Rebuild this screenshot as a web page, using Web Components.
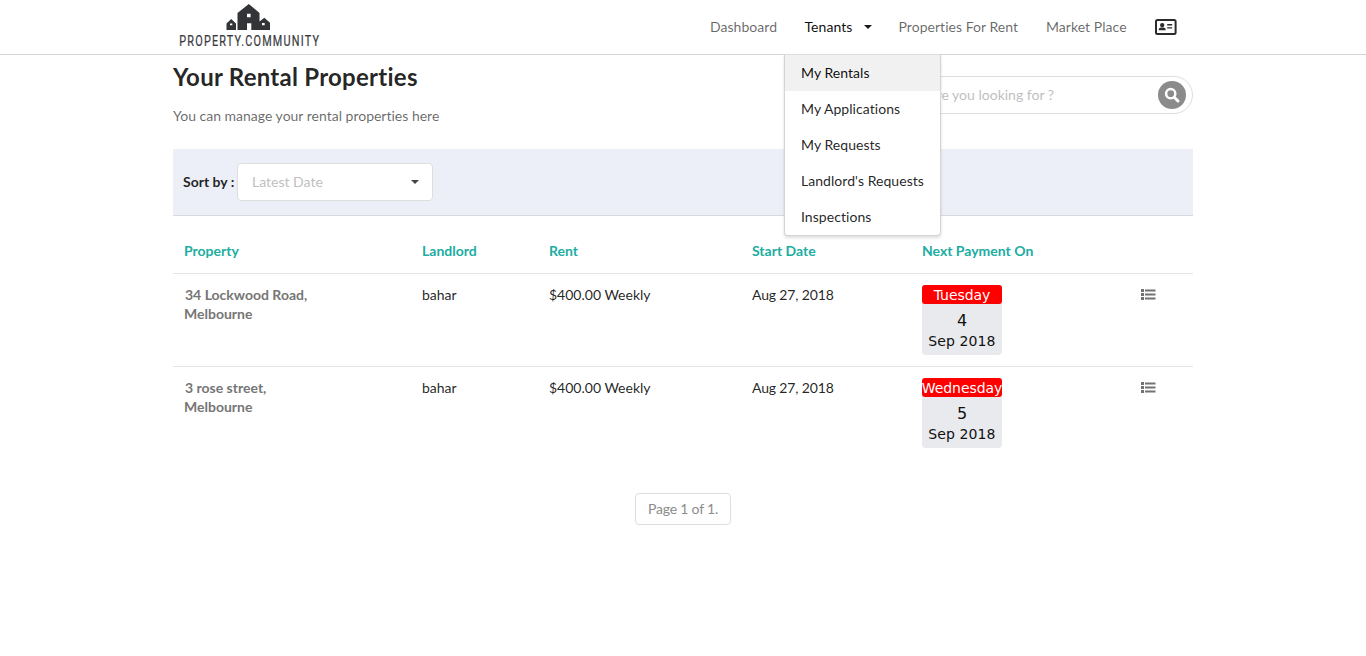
<!DOCTYPE html>
<html lang="en">
<head>
<meta charset="utf-8">
<title>Your Rental Properties</title>
<style>
body{margin:0;background:#fff;font:14px/20px Lato,"Open Sans",sans-serif;font-variant-ligatures:none;color:rgba(0,0,0,.87);overflow:hidden}
</style>
</head>
<body>
<rental-page></rental-page>
<script>
function define(name, html){
  const t=document.createElement('template');
  t.innerHTML='<style>*{box-sizing:border-box}</style>'+html;
  customElements.define(name, class extends HTMLElement{
    constructor(){super();this.attachShadow({mode:'open'}).appendChild(t.content.cloneNode(true));}
  });
}

define('site-logo', `<style>:host{display:block;width:150px;height:54px}svg{display:block}</style>
<svg width="150" height="54" viewBox="0 0 150 54">
<g fill="#333437">
<path fill-rule="evenodd" d="M58.500 30V13L69.800 4 80.500 13V21.500L85.300 17.700 91 22.800V30H72.300V23.200H68V30ZM68 13.800V17.300H71.600V13.800ZM83 23V25.300H85.700V23Z"/>
<path fill-rule="evenodd" d="M47.500 30V23.500L52.200 19 57 23.500V30ZM51 23.500V25.300H53.300V23.500Z"/>
</g>
<text x="0" y="46" transform="translate(.3 0) scale(.7 1)" font-family="Roboto,sans-serif" font-size="15.500" fill="#3a3b3e" stroke="#3a3b3e" stroke-width=".25" textLength="199.500" lengthAdjust="spacing">PROPERTY.COMMUNITY</text>
</svg>`);

define('nav-item', `<style>:host{display:block;color:rgba(0,0,0,.6);white-space:nowrap;line-height:20px;letter-spacing:.04px}:host([active]){color:rgba(0,0,0,.95)}</style><slot></slot>`);

define('caret-down', `<style>:host{display:block;width:8px;height:4px}svg{display:block}</style><svg width="8" height="4"><path d="M0 0H8L4 4Z" fill="currentColor"/></svg>`);

define('menu-item', `<style>:host{display:block;height:36px;padding:8px 16px;color:rgba(0,0,0,.87);white-space:nowrap;letter-spacing:.05px}:host([selected]){background:#f1f1f1;color:rgba(0,0,0,.95)}</style><slot></slot>`);

define('drop-menu', `<style>:host{display:block;width:157px;height:182px;background:#fff;border:1px solid #d4d4d5;border-top-color:#ddd;border-radius:0 0 4px 4px;box-shadow:0 2px 3px rgba(34,36,38,.15);overflow:hidden}</style><slot></slot>`);

define('id-card-icon', `<style>:host{display:block;width:22px;height:16px}svg{display:block}</style>
<svg width="22" height="16" viewBox="0 0 22 16" fill="#2b2b2b"><rect x="1" y="1" width="19.600" height="14" rx="1.500" fill="none" stroke="#2b2b2b" stroke-width="2"/><circle cx="7.200" cy="6.100" r="2.200"/><path d="M3.600 11.300q0-2.600 2.200-2.800h2.800q2.200.2 2.200 2.800z"/><path d="M12.200 5h5v1.400h-5zM12.200 8.200h5v1.400h-5z"/></svg>`);

define('top-bar', `<style>
:host{display:block;height:55px;border-bottom:1px solid #d4d4d5;background:#fff}
.in{width:1020px;height:54px;margin:0 auto;display:flex;padding:0 16px 0 6px;justify-content:space-between;align-items:center}
nav{display:flex;align-items:center;height:54px}
.d{width:67px;margin-right:27.500px}.t{width:94px;position:relative;display:flex;gap:12px;align-items:center}.p{width:147.500px}.m{width:109px;margin:0}
caret-down{color:#1b1b1b}
drop-menu{position:absolute;left:-20.500px;top:37px;z-index:5}
</style>
<div class="in"><site-logo></site-logo>
<nav><nav-item class="d">Dashboard</nav-item>
<div class="t"><nav-item active>Tenants</nav-item><caret-down></caret-down>
<drop-menu><menu-item selected>My Rentals</menu-item><menu-item>My Applications</menu-item><menu-item>My Requests</menu-item><menu-item>Landlord's Requests</menu-item><menu-item>Inspections</menu-item></drop-menu></div>
<nav-item class="p">Properties For Rent</nav-item><nav-item class="m">Market Place</nav-item><id-card-icon></id-card-icon></nav></div>`);

define('search-box', `<style>
:host{display:flex;width:318px;height:38px;border:1px solid #dededf;border-radius:19px;align-items:center;justify-content:space-between;padding:0 6px 0 16px;color:#bfbfbf;background:#fff}
svg{display:block}</style><slot></slot>
<svg width="28" height="28"><circle cx="14" cy="14" r="14" fill="#8b8b8b"/><circle cx="12.700" cy="12.700" r="4.600" fill="none" stroke="#fff" stroke-width="2.500"/><path d="M16.200 16.200L20 20" stroke="#fff" stroke-width="3" stroke-linecap="round"/></svg>`);

define('page-heading', `<style>
:host{display:flex;justify-content:space-between;height:94px}
h1{margin:6px 0 0;font-size:24px;line-height:31px;font-weight:700;color:rgba(0,0,0,.87);letter-spacing:.26px}
p{margin:14px 0 0;color:rgba(0,0,0,.6)}search-box{margin-top:21px}
</style><div><h1><slot name="title"></slot></h1><p><slot></slot></p></div><search-box>What are you looking for ?</search-box>`);

define('select-box', `<style>:host{display:flex;width:196px;height:38px;border:1px solid #dededf;border-radius:4px;background:#fff;align-items:center;justify-content:space-between;padding:0 13px 0 14px;color:#bfbfbf}caret-down{color:#444}</style><slot></slot><caret-down></caret-down>`);

define('sort-bar', `<style>:host{display:flex;height:67px;background:#eceff7;border-bottom:1px solid #d9dadf;padding:0 10px;align-items:center}b{width:54px}</style><b>Sort by :</b><select-box><slot></slot></select-box>`);

define('list-icon', `<style>:host{display:block;width:15px;height:11px}svg{display:block}</style><svg width="15" height="11" fill="#727272"><path d="M0 0h3v3H0zM0 4h3v3H0zM0 8h3v3H0zM4 .5h10.500v2H4zM4 4.500h10.500v2H4zM4 8.500h10.500v2H4z"/></svg>`);

define('date-card', `<style>
:host{display:block;width:80px;height:70px;border-radius:4px;background:#e9eaee;text-align:center;font-family:Verdana,"DejaVu Sans",sans-serif;color:#111;font-size:14px;white-space:nowrap}
.w{height:19px;line-height:20px;background:#f00;color:#fff;border-radius:3px;display:flex;justify-content:center;letter-spacing:-.05px}
.n{font-size:16px;line-height:21px;margin-top:6px}.m{line-height:21px;letter-spacing:.1px}
</style><div class="w"><slot name="day"></slot></div><div class="n"><slot></slot></div><div class="m"><slot name="month"></slot></div>`);

define('table-head', `<style>:host{display:grid;grid-template-columns:238px 127px 203px 170px 1fr;height:58px;align-items:center;padding:12px 11px 0;border-bottom:1px solid #e4e4e5;color:#20ada2;font-weight:700}</style><slot></slot>`);

define('rental-row', `<style>:host{display:grid;grid-template-columns:238px 127px 203px 170px 219px 1fr;height:93px;padding:11px 11px 0;line-height:19px;border-bottom:1px solid #e4e4e5}:host([last]){border:0}
.a{font-weight:700;color:#767676}.a span{display:block;padding-left:1px}.s{letter-spacing:-.15px}list-icon{margin-top:4px}</style>
<div class="a"><span><slot name="street"></slot></span><slot name="city"></slot></div><div><slot name="landlord"></slot></div><div><slot name="rent"></slot></div><div class="s"><slot name="start"></slot></div><slot name="next"></slot><list-icon></list-icon>`);

define('page-count', `<style>:host{display:flex;width:96px;height:32px;margin:33px auto 0;border:1px solid #dededf;border-radius:4px;align-items:center;justify-content:center;color:#8c8c8c;letter-spacing:-.2px}</style><slot></slot>`);

const row=(s,l,d,n,last)=>`<rental-row ${last}><span slot="street">${s}</span><span slot="city">Melbourne</span><span slot="landlord">${l}</span><span slot="rent">$400.00 Weekly</span><span slot="start">Aug 27, 2018</span><date-card slot="next"><span slot="day">${d}</span>${n}<span slot="month">Sep 2018</span></date-card></rental-row>`;
define('rental-page', `<style>:host{display:block}main{width:1020px;margin:0 auto}</style>
<top-bar></top-bar><main>
<page-heading><span slot="title">Your Rental Properties</span>You can manage your rental properties here</page-heading>
<sort-bar>Latest Date</sort-bar>
<table-head><span>Property</span><span>Landlord</span><span>Rent</span><span>Start Date</span><span>Next Payment On</span></table-head>
${row('34 Lockwood Road,','bahar','Tuesday',4,'')}${row('3 rose street,','bahar','Wednesday',5,'last')}
<page-count>Page 1 of 1.</page-count></main>`);
</script>
</body>
</html>
